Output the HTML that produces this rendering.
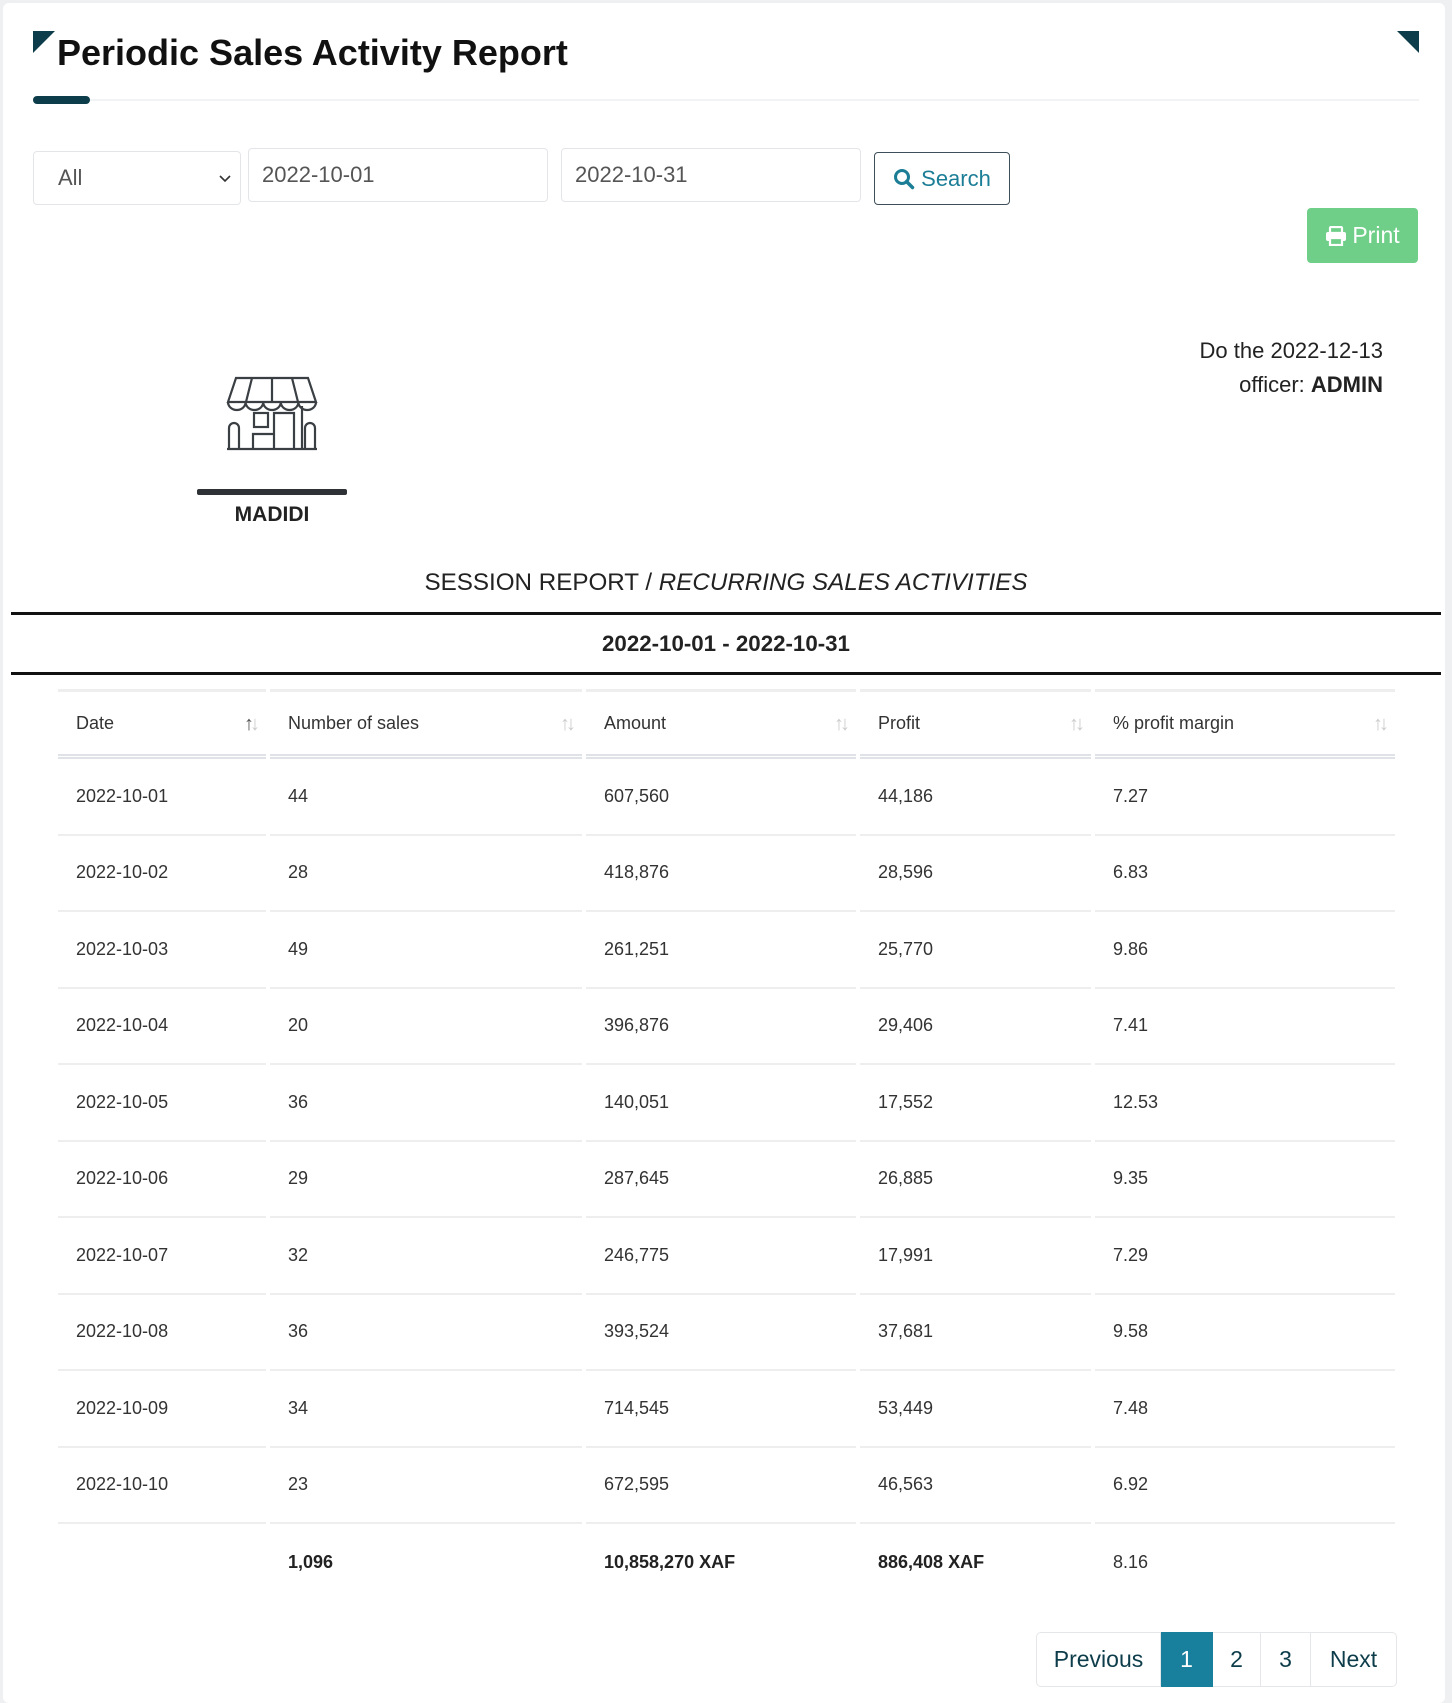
<!DOCTYPE html>
<html><head><meta charset="utf-8">
<style>
*{box-sizing:border-box;margin:0;padding:0}
body{width:1452px;height:1699px;background:#eef0f2;font-family:"Liberation Sans",Arial,sans-serif;color:#333;position:relative;overflow:hidden}
.card{position:absolute;left:3px;top:3px;width:1442px;height:1700px;background:#fff;border-radius:6px}
.abs{position:absolute}
.title{left:57px;top:32px;font-size:36px;font-weight:bold;color:#111;white-space:nowrap}
.inp{border:1px solid #e3e5e8;border-radius:4px;font-size:22px;color:#555;padding-left:13px;display:flex;align-items:center}
.row{position:absolute;left:58px;display:flex;height:76.5px}
.c{height:100%;display:flex;align-items:center;padding-left:18px;font-size:18px;color:#333;border-bottom:2px solid #eeeeee;margin-right:4px;position:relative}
.c:last-child{margin-right:0}
.w1{width:208px}.w2{width:312px}.w3{width:270px}.w4{width:231px}.w5{width:300px}
.hd .c{border-top:3px solid #eeeeee;border-bottom:5px double #dfe3e7;color:#333}
.sort{position:absolute;right:10px;top:50%;margin-top:-10px;font-size:20px;color:#ccc;letter-spacing:-4px}
.tot .c{border-bottom:none}
.b{font-weight:bold;color:#222}
.pg{position:absolute;top:1632px;height:55px;display:flex;align-items:center;justify-content:center;font-size:23px;color:#0d3d4a;border:1px solid #e4e6e9;border-left:none}
</style></head><body>
<div class="card"></div>
<div class="abs" style="left:33px;top:31px;width:0;height:0;border-top:22px solid #0d3d4a;border-right:22px solid transparent"></div>
<div class="abs title">Periodic Sales Activity Report</div>
<div class="abs" style="left:1397px;top:31px;width:0;height:0;border-top:22px solid #0d3d4a;border-left:22px solid transparent"></div>
<div class="abs" style="left:33px;top:99px;width:1386px;height:2px;background:#f2f3f4"></div>
<div class="abs" style="left:33px;top:96px;width:57px;height:8px;background:#0d3d4a;border-radius:4px"></div>

<div class="abs inp" style="left:33px;top:151px;width:208px;height:54px;padding-left:24px">All<svg style="position:absolute;right:8px;top:22px" width="14" height="10" viewBox="0 0 14 10"><path d="M2 2l5 5 5-5" fill="none" stroke="#333" stroke-width="1.6"/></svg></div>
<div class="abs inp" style="left:248px;top:148px;width:300px;height:54px">2022-10-01</div>
<div class="abs inp" style="left:561px;top:148px;width:300px;height:54px">2022-10-31</div>
<div class="abs" style="left:874px;top:152px;width:136px;height:53px;border:1.5px solid #3d4f58;border-radius:4px;display:flex;align-items:center;justify-content:center;color:#1c7e96;font-size:22px">
<svg width="22" height="22" viewBox="0 0 22 22" style="margin-right:6px"><circle cx="9" cy="9" r="6.5" fill="none" stroke="#1c7e96" stroke-width="3"/><path d="M13.5 13.5l6 6" stroke="#1c7e96" stroke-width="3.5" stroke-linecap="round"/></svg>Search</div>
<div class="abs" style="left:1307px;top:208px;width:111px;height:55px;background:#6fcf88;border-radius:4px;display:flex;align-items:center;justify-content:center;color:#fff;font-size:23px">
<svg width="22" height="20" viewBox="0 0 22 20" style="margin-right:5px"><rect x="5" y="1" width="12" height="6" rx="1" fill="none" stroke="#fff" stroke-width="2.2"/><rect x="1" y="6" width="20" height="9" rx="2" fill="#fff"/><rect x="5" y="12" width="12" height="7" fill="#6fcf88" stroke="#fff" stroke-width="2.2"/></svg>Print</div>

<div class="abs" style="right:69px;top:334px;text-align:right;font-size:22px;line-height:34px;color:#222">Do the 2022-12-13<br>officer: <b>ADMIN</b></div>

<svg class="abs" style="left:226px;top:376px" width="92" height="76" viewBox="0 0 92 76" fill="none" stroke="#3a3f44" stroke-width="2.2">
<path d="M10 2h72l8 24H2z"/>
<path d="M2 26a8.8 8 0 0 0 17.6 0a8.8 8 0 0 0 17.6 0a8.8 8 0 0 0 17.6 0a8.8 8 0 0 0 17.6 0a8.8 8 0 0 0 17.6 0"/>
<path d="M26 2l-6 24M46 2v24M66 2l6 24"/>
<path d="M3 72V52a5 5 0 0 1 10 0v20M79 72V52a5 5 0 0 1 10 0v20"/>
<path d="M76 30v42"/>
<rect x="28" y="37" width="14" height="14"/>
<path d="M48 72V37h20v35M27 72V58h21"/>
<path d="M1 73h90"/>
</svg>
<div class="abs" style="left:197px;top:489px;width:150px;height:6px;background:#2e3236;border-radius:2px"></div>
<div class="abs" style="left:197px;top:503px;width:150px;text-align:center;font-size:21px;font-weight:bold;color:#222">MADIDI</div>

<div class="abs" style="left:0;width:1452px;top:569px;text-align:center;font-size:24.2px;color:#222">SESSION REPORT / <i>RECURRING SALES ACTIVITIES</i></div>
<div class="abs" style="left:11px;top:612px;width:1430px;height:3px;background:#111"></div>
<div class="abs" style="left:0;width:1452px;top:631px;text-align:center;font-size:22.3px;font-weight:bold;color:#222">2022-10-01 - 2022-10-31</div>
<div class="abs" style="left:11px;top:672px;width:1430px;height:3px;background:#111"></div>

<div class="row hd" style="top:689px;height:70px">
<div class="c w1">Date<span class="sort" style="color:#555">↑<span style="color:#ccc">↓</span></span></div>
<div class="c w2">Number of sales<span class="sort">↑↓</span></div>
<div class="c w3">Amount<span class="sort">↑↓</span></div>
<div class="c w4">Profit<span class="sort">↑↓</span></div>
<div class="c w5">% profit margin<span class="sort">↑↓</span></div>
</div>
<div class="row" style="top:759px"><div class="c w1">2022-10-01</div><div class="c w2">44</div><div class="c w3">607,560</div><div class="c w4">44,186</div><div class="c w5">7.27</div></div>
<div class="row" style="top:835.5px"><div class="c w1">2022-10-02</div><div class="c w2">28</div><div class="c w3">418,876</div><div class="c w4">28,596</div><div class="c w5">6.83</div></div>
<div class="row" style="top:912px"><div class="c w1">2022-10-03</div><div class="c w2">49</div><div class="c w3">261,251</div><div class="c w4">25,770</div><div class="c w5">9.86</div></div>
<div class="row" style="top:988.5px"><div class="c w1">2022-10-04</div><div class="c w2">20</div><div class="c w3">396,876</div><div class="c w4">29,406</div><div class="c w5">7.41</div></div>
<div class="row" style="top:1065px"><div class="c w1">2022-10-05</div><div class="c w2">36</div><div class="c w3">140,051</div><div class="c w4">17,552</div><div class="c w5">12.53</div></div>
<div class="row" style="top:1141.5px"><div class="c w1">2022-10-06</div><div class="c w2">29</div><div class="c w3">287,645</div><div class="c w4">26,885</div><div class="c w5">9.35</div></div>
<div class="row" style="top:1218px"><div class="c w1">2022-10-07</div><div class="c w2">32</div><div class="c w3">246,775</div><div class="c w4">17,991</div><div class="c w5">7.29</div></div>
<div class="row" style="top:1294.5px"><div class="c w1">2022-10-08</div><div class="c w2">36</div><div class="c w3">393,524</div><div class="c w4">37,681</div><div class="c w5">9.58</div></div>
<div class="row" style="top:1371px"><div class="c w1">2022-10-09</div><div class="c w2">34</div><div class="c w3">714,545</div><div class="c w4">53,449</div><div class="c w5">7.48</div></div>
<div class="row" style="top:1447.5px"><div class="c w1">2022-10-10</div><div class="c w2">23</div><div class="c w3">672,595</div><div class="c w4">46,563</div><div class="c w5">6.92</div></div>
<div class="row tot" style="top:1524px"><div class="c w1"></div><div class="c w2 b">1,096</div><div class="c w3 b">10,858,270 XAF</div><div class="c w4 b">886,408 XAF</div><div class="c w5">8.16</div></div>

<div class="pg" style="left:1036px;width:125px;border-left:1px solid #e4e6e9;border-radius:5px 0 0 5px">Previous</div>
<div class="pg" style="left:1161px;width:52px;background:#187f9c;color:#fff;border-color:#187f9c">1</div>
<div class="pg" style="left:1213px;width:48px">2</div>
<div class="pg" style="left:1261px;width:50px">3</div>
<div class="pg" style="left:1311px;width:86px;border-radius:0 5px 5px 0">Next</div>
</body></html>
